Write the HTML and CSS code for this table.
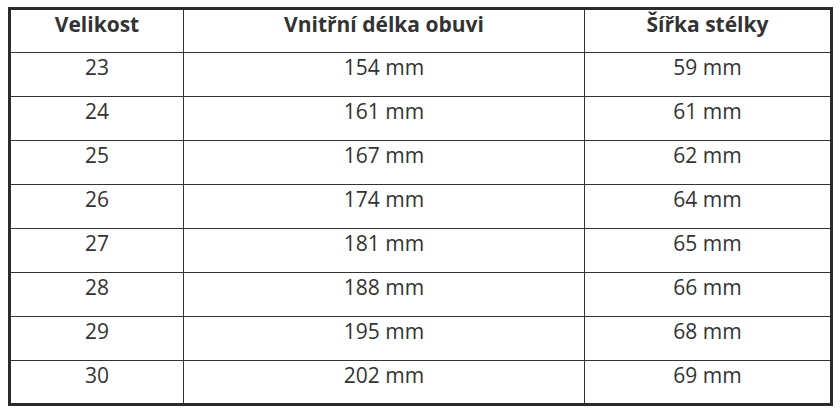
FILE: index.html
```html
<!DOCTYPE html>
<html lang="cs">
<head>
<meta charset="utf-8">
<link rel="stylesheet" href="styles.css">
</head>
<body>
<table class="size-table">
  <thead>
    <tr><th class="c1">Velikost</th><th class="c2">Vnitřní délka obuvi</th><th class="c3">Šířka stélky</th></tr>
  </thead>
  <tbody>
    <tr><td>23</td><td>154 mm</td><td>59 mm</td></tr>
    <tr><td>24</td><td>161 mm</td><td>61 mm</td></tr>
    <tr><td>25</td><td>167 mm</td><td>62 mm</td></tr>
    <tr><td>26</td><td>174 mm</td><td>64 mm</td></tr>
    <tr><td>27</td><td>181 mm</td><td>65 mm</td></tr>
    <tr><td>28</td><td>188 mm</td><td>66 mm</td></tr>
    <tr><td>29</td><td>195 mm</td><td>68 mm</td></tr>
    <tr><td>30</td><td>202 mm</td><td>69 mm</td></tr>
  </tbody>
</table>
</body>
</html>
```
FILE: styles.css
```css
html, body {
  margin: 0;
  padding: 0;
  background: #ffffff;
}
body {
  padding: 7px 8px 0 8px;
  font-family: "Open Sans", "Noto Sans", sans-serif;
  color: #333333;
}
.size-table {
  width: 825px;
  border-collapse: collapse;
  border: 3px solid #2b2b2b;
  table-layout: fixed;
}
.size-table th,
.size-table td {
  border: 1px solid #333333;
  text-align: center;
  vertical-align: top;
  font-size: 21px;
  line-height: 28px;
  height: 44px;
  padding: 0;
  box-sizing: border-box;
}
.size-table th {
  font-weight: 700;
}
.size-table td {
  font-weight: 400;
}
.c1 { width: 174px; }
.c2 { width: 401px; }
```
